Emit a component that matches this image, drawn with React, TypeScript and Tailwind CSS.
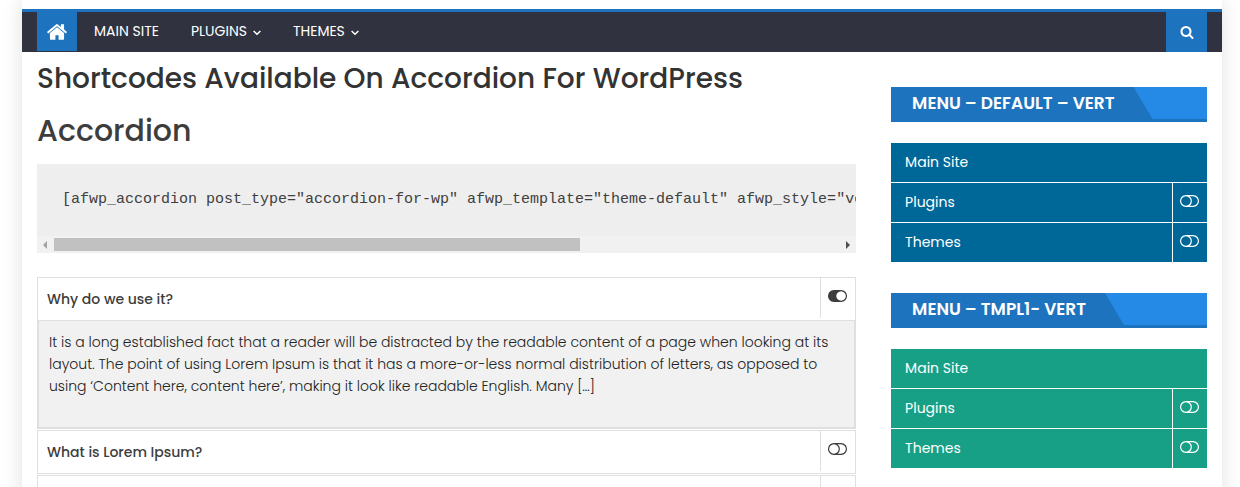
import { useState } from "react";

type MenuItem = { label: string; expandable: boolean };

const menuItems: MenuItem[] = [
  { label: "Main Site", expandable: false },
  { label: "Plugins", expandable: true },
  { label: "Themes", expandable: true },
];

const toggleOnPath =
  "M0 896q0-130 51-248.5t136.5-204 204-136.5 248.5-51h768q130 0 248.5 51t204 136.5 136.5 204 51 248.5-51 248.5-136.5 204-204 136.5-248.5 51h-768q-130 0-248.5-51t-204-136.5-136.5-204-51-248.5zm1408 512q104 0 198.5-40.5t163.5-109.5 109.5-163.5 40.5-198.5-40.5-198.5-109.5-163.5-163.5-109.5-198.5-40.5-198.5 40.5-163.5 109.5-109.5 163.5-40.5 198.5 40.5 198.5 109.5 163.5 163.5 109.5 198.5 40.5z";
const toggleOffPath =
  "M1152 896q0-104-40.5-198.5t-109.5-163.5-163.5-109.5-198.5-40.5-198.5 40.5-163.5 109.5-109.5 163.5-40.5 198.5 40.5 198.5 109.5 163.5 163.5 109.5 198.5 40.5 198.5-40.5 163.5-109.5 109.5-163.5 40.5-198.5zm768 0q0-104-40.5-198.5t-109.5-163.5-163.5-109.5-198.5-40.5h-386q119 90 188.5 224t69.5 288-69.5 288-188.5 224h386q104 0 198.5-40.5t163.5-109.5 109.5-163.5 40.5-198.5zm128 0q0 130-51 248.5t-136.5 204-204 136.5-248.5 51h-768q-130 0-248.5-51t-204-136.5-136.5-204-51-248.5 51-248.5 136.5-204 204-136.5 248.5-51h768q130 0 248.5 51t204 136.5 136.5 204 51 248.5z";
const homePath =
  "M1472 992v480q0 26-19 45t-45 19h-384v-384h-256v384h-384q-26 0-45-19t-19-45v-480q0-1 .5-3t.5-3l575-474 575 474q1 2 1 6zm223-69l-62 74q-8 9-21 11h-3q-13 0-21-7l-692-577-692 577q-12 8-24 7-13-2-21-11l-62-74q-8-10-7-23.5t11-21.5l719-599q32-26 76-26t76 26l244 204v-195q0-14 9-23t23-9h192q14 0 23 9t9 23v408l219 182q10 8 11 21.5t-7 23.5z";
const searchPath =
  "M1216 832q0-185-131.5-316.5t-316.5-131.5-316.5 131.5-131.5 316.5 131.5 316.5 316.5 131.5 316.5-131.5 131.5-316.5zm512 832q0 52-38 90t-90 38q-54 0-90-38l-343-342q-179 124-399 124-143 0-273.5-55.5t-225-150-150-225-55.5-273.5 55.5-273.5 150-225 225-150 273.5-55.5 273.5 55.5 225 150 150 225 55.5 273.5q0 220-124 399l343 343q37 37 37 90z";

function ToggleIcon({ on = false }: { on?: boolean }) {
  return (
    <svg width="19" height="12" viewBox="0 256 2048 1280" fill="currentColor" aria-hidden="true">
      <path d={on ? toggleOnPath : toggleOffPath} />
    </svg>
  );
}

function Chevron() {
  return (
    <svg className="mt-1" width="8" height="6" viewBox="0 0 8 6" fill="none" stroke="currentColor" strokeWidth="1.5" aria-hidden="true">
      <path d="M0.6 1 4 4.3 7.4 1" />
    </svg>
  );
}

function NavBar() {
  return (
    <header className="flex h-[43px] items-stretch border-t-[3px] border-[#1e73be] bg-[#30333f] px-[15px] text-white">
      <a href="#home" aria-label="Home" className="mb-px flex w-10 items-center justify-center bg-[#1e73be]">
        <svg width="22" height="22" viewBox="0 0 1792 1792" fill="currentColor" aria-hidden="true">
          <path d={homePath} />
        </svg>
      </a>
      <nav className="flex flex-1 items-center gap-8 pb-[3px] pl-[17px] text-[14px] leading-5">
        <a href="#main">MAIN SITE</a>
        <a href="#plugins" className="flex items-center gap-[6px]">
          PLUGINS <Chevron />
        </a>
        <a href="#themes" className="flex items-center gap-[6px]">
          THEMES <Chevron />
        </a>
      </nav>
      <button type="button" aria-label="Search" className="flex w-[41px] items-center justify-center bg-[#1e73be]">
        <svg width="14" height="14" viewBox="0 0 1792 1792" fill="currentColor" aria-hidden="true">
          <path d={searchPath} />
        </svg>
      </button>
    </header>
  );
}

function CodeBlock() {
  return (
    <div className="bg-[#eee]">
      <pre className="overflow-hidden px-[25px] py-6 font-['Courier_New','Liberation_Mono',monospace] text-[15px] leading-6 text-[#404040]">
        {'[afwp_accordion post_type="accordion-for-wp" afwp_template="theme-default" afwp_style="vertical"]'}
      </pre>
      <div className="flex h-[17px] items-center justify-between bg-[#f1f1f1] px-[6px]">
        <svg width="4" height="8" viewBox="0 0 4 8" fill="#a3a3a3" aria-hidden="true">
          <path d="M4 0v8L0 4z" />
        </svg>
        <div className="mx-[7px] flex-1">
          <div className="h-[13px] w-[67%] bg-[#c1c1c1]" />
        </div>
        <svg width="4" height="8" viewBox="0 0 4 8" fill="#505050" aria-hidden="true">
          <path d="M0 0v8l4-4z" />
        </svg>
      </div>
    </div>
  );
}

type PanelProps = { title: string; open: boolean; onToggle: () => void; text: string };

function Panel({ title, open, onToggle, text }: PanelProps) {
  return (
    <section>
      <h3 className="border border-[#dfdfdf]">
        <button type="button" aria-expanded={open} onClick={onToggle} className="flex h-[42px] w-full items-start text-left">
          <span className="flex-1 self-center pl-[9px] text-[14px] leading-5 font-medium">{title}</span>
          <span className="flex h-10 w-[35px] border-l border-[#dfdfdf] pt-3 pl-[7px]">
            <ToggleIcon on={open} />
          </span>
        </button>
      </h3>
      {open && (
        <div className="-mt-px border-2 border-t border-[#dfdfdf] bg-[#f1f1f1] pt-[10px] pr-2 pb-[30px] pl-[10px]">
          <p className="text-[14px] leading-[22px] font-light text-[#222]">{text}</p>
        </div>
      )}
    </section>
  );
}

const panels = [
  {
    title: "Why do we use it?",
    text: "It is a long established fact that a reader will be distracted by the readable content of a page when looking at its layout. The point of using Lorem Ipsum is that it has a more-or-less normal distribution of letters, as opposed to using ‘Content here, content here’, making it look like readable English. Many […]",
  },
  { title: "What is Lorem Ipsum?", text: "" },
  { title: "", text: "" },
];

function Accordion() {
  const [openIndex, setOpenIndex] = useState(0);
  return (
    <div className="mt-6 flex flex-col gap-px">
      {panels.map((panel, i) => (
        <Panel
          key={i}
          title={panel.title}
          text={panel.text}
          open={openIndex === i}
          onToggle={() => setOpenIndex(openIndex === i ? -1 : i)}
        />
      ))}
    </div>
  );
}

function Widget({ title, color }: { title: string; color: string }) {
  return (
    <section>
      <div className="flex h-[35px] overflow-hidden border-b-[3px] border-[#1e73be] bg-[#248ae6]">
        <h2 className="bg-[#1e73be] pr-[38px] pl-[21px] text-[17px] leading-8 font-semibold whitespace-nowrap text-white [clip-path:polygon(0_0,calc(100%-19px)_0,100%_100%,0_100%)]">
          {title}
        </h2>
      </div>
      <ul className="mt-[21px] flex flex-col gap-px text-[14px] leading-5 text-white">
        {menuItems.map((item) => (
          <li key={item.label} className="flex h-[39px] gap-px">
            <a href="#menu" className={`flex flex-1 items-center pb-[2px] pl-[14px] ${color}`}>
              {item.label}
            </a>
            {item.expandable && (
              <button type="button" aria-label={`Expand ${item.label}`} className={`flex w-[34px] pt-3 pl-[7px] ${color}`}>
                <ToggleIcon />
              </button>
            )}
          </li>
        ))}
      </ul>
    </section>
  );
}

export default function App() {
  return (
    <div className="h-screen overflow-hidden bg-white pr-[18px] pl-[22px] font-['Poppins','Inter',sans-serif] text-[#3d3d3d]">
      <div className="min-h-screen bg-white pt-[9px] shadow-[0_0_20px_rgba(0,0,0,0.12)]">
        <NavBar />
        <div className="flex items-start justify-between px-[15px]">
          <main className="w-[70%] pt-px">
            <h1 className="text-[28px] leading-[52px] font-medium text-[#333]">
              Shortcodes Available On Accordion For WordPress
            </h1>
            <h2 className="mb-[7px] text-[30px] leading-[52px] font-medium">Accordion</h2>
            <CodeBlock />
            <Accordion />
          </main>
          <aside className="flex w-[27%] flex-col gap-[31px] pt-[35px]">
            <Widget title="MENU – DEFAULT – VERT" color="bg-[#006799]" />
            <Widget title="MENU – TMPL1- VERT" color="bg-[#17a086]" />
          </aside>
        </div>
      </div>
    </div>
  );
}
